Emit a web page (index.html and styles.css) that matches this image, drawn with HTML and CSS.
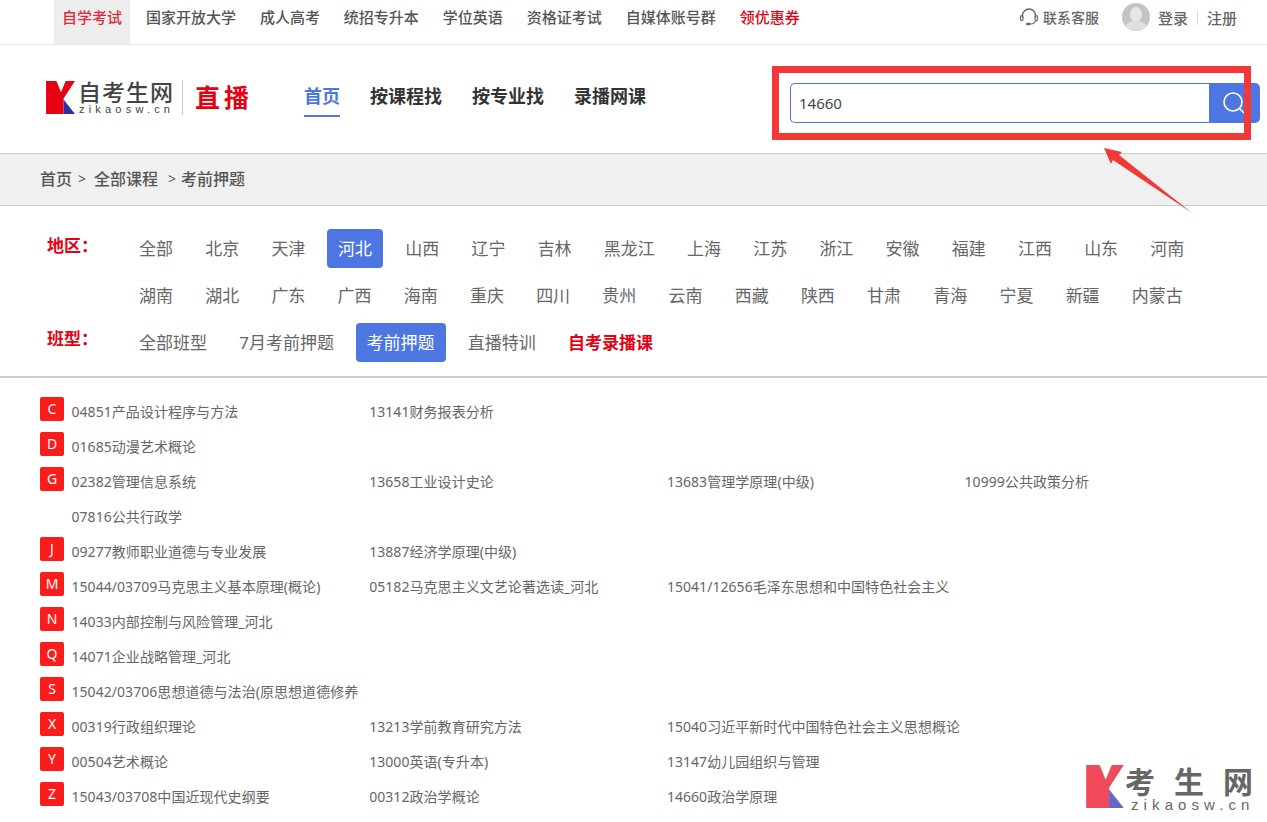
FILE: index.html
```html
<!DOCTYPE html>
<html lang="zh-CN">
<head>
  <meta charset="UTF-8" />
  <title>自考生网直播</title>
  <link rel="stylesheet" href="styles.css">
</head>
<body>
  <div class="topbar">
    <nav class="top-links">
      <a class="top-link current">自学考试</a>
      <a class="top-link">国家开放大学</a>
      <a class="top-link">成人高考</a>
      <a class="top-link">统招专升本</a>
      <a class="top-link">学位英语</a>
      <a class="top-link">资格证考试</a>
      <a class="top-link">自媒体账号群</a>
      <a class="top-link hot">领优惠券</a>
    </nav>
    <div class="top-user">
      <svg class="headset" viewBox="0 0 20 20" width="20" height="20" fill="none" stroke="#666">
        <path d="M3.5 11V8.5a6.5 6.5 0 0 1 13 0V11" stroke-width="1.4"/>
        <rect x="1.4" y="8.6" width="2.6" height="5" rx="1.3" stroke-width="1.1"/>
        <rect x="16" y="8.6" width="2.6" height="5" rx="1.3" stroke-width="1.1"/>
        <path d="M16.5 13.5c-.5 2.6-2.4 3.5-5 3.5" stroke-width="1.2"/>
        <rect x="7" y="15.8" width="4.6" height="2.4" rx="1.2" fill="#666" stroke="none"/>
      </svg>
      <span class="service">联系客服</span>
      <span class="avatar"><span class="avatar-head"></span><span class="avatar-body"></span></span>
      <a class="user-link">登录</a>
      <span class="user-sep"></span>
      <a class="user-link">注册</a>
    </div>
  </div>

  <header class="header">
    <div class="logo">
      <svg class="logo-k" viewBox="0 0 28 32" width="29" height="33">
        <path d="M0 0H10L14.5 11L19 0H28L17 17V32H0Z" fill="#e60012"/>
        <path d="M17 18L28 32H17Z" fill="#2a2fa8"/>
      </svg>
      <div class="logo-name">
        <div class="logo-cn">自考生网</div>
        <div class="logo-en">zikaosw.cn</div>
      </div>
      <span class="logo-sep"></span>
      <span class="logo-live">直播</span>
    </div>
    <nav class="main-nav">
      <a class="main-link current">首页</a>
      <a class="main-link">按课程找</a>
      <a class="main-link">按专业找</a>
      <a class="main-link">录播网课</a>
    </nav>
    <form class="search">
      <input class="search-input" type="text" value="14660" />
      <button class="search-btn" type="button">
        <svg viewBox="0 0 24 24" width="24" height="24" fill="none" stroke="#fff" stroke-width="1.6">
          <circle cx="11" cy="11" r="9"/>
          <path d="M17.5 17.5L22 22"/>
        </svg>
      </button>
    </form>
  </header>

  <div class="crumbs">
    <span>首页</span><i>&gt;</i><span>全部课程</span><i class="wide">&gt;</i><span>考前押题</span>
  </div>

  <section class="filters">
    <div class="filter-row">
      <div class="filter-label">地区：</div>
      <div class="filter-items">
        <a class="filter-item">全部</a>
        <a class="filter-item">北京</a>
        <a class="filter-item">天津</a>
        <a class="filter-item active">河北</a>
        <a class="filter-item">山西</a>
        <a class="filter-item">辽宁</a>
        <a class="filter-item">吉林</a>
        <a class="filter-item">黑龙江</a>
        <a class="filter-item">上海</a>
        <a class="filter-item">江苏</a>
        <a class="filter-item">浙江</a>
        <a class="filter-item">安徽</a>
        <a class="filter-item">福建</a>
        <a class="filter-item">江西</a>
        <a class="filter-item">山东</a>
        <a class="filter-item">河南</a>
        <a class="filter-item">湖南</a>
        <a class="filter-item">湖北</a>
        <a class="filter-item">广东</a>
        <a class="filter-item">广西</a>
        <a class="filter-item">海南</a>
        <a class="filter-item">重庆</a>
        <a class="filter-item">四川</a>
        <a class="filter-item">贵州</a>
        <a class="filter-item">云南</a>
        <a class="filter-item">西藏</a>
        <a class="filter-item">陕西</a>
        <a class="filter-item">甘肃</a>
        <a class="filter-item">青海</a>
        <a class="filter-item">宁夏</a>
        <a class="filter-item">新疆</a>
        <a class="filter-item">内蒙古</a>
      </div>
    </div>
    <div class="filter-row">
      <div class="filter-label">班型：</div>
      <div class="filter-items">
        <a class="filter-item">全部班型</a>
        <a class="filter-item">7月考前押题</a>
        <a class="filter-item active">考前押题</a>
        <a class="filter-item">直播特训</a>
        <a class="filter-item strong">自考录播课</a>
      </div>
    </div>
  </section>

  <section class="courses">
    <div class="course-group">
      <span class="letter">C</span>
      <div class="course-list">
        <a class="course">04851产品设计程序与方法</a>
        <a class="course">13141财务报表分析</a>
      </div>
    </div>
    <div class="course-group">
      <span class="letter">D</span>
      <div class="course-list">
        <a class="course">01685动漫艺术概论</a>
      </div>
    </div>
    <div class="course-group">
      <span class="letter">G</span>
      <div class="course-list">
        <a class="course">02382管理信息系统</a>
        <a class="course">13658工业设计史论</a>
        <a class="course">13683管理学原理(中级)</a>
        <a class="course">10999公共政策分析</a>
        <a class="course">07816公共行政学</a>
      </div>
    </div>
    <div class="course-group">
      <span class="letter">J</span>
      <div class="course-list">
        <a class="course">09277教师职业道德与专业发展</a>
        <a class="course">13887经济学原理(中级)</a>
      </div>
    </div>
    <div class="course-group">
      <span class="letter">M</span>
      <div class="course-list">
        <a class="course">15044/03709马克思主义基本原理(概论)</a>
        <a class="course">05182马克思主义文艺论著选读_河北</a>
        <a class="course">15041/12656毛泽东思想和中国特色社会主义</a>
      </div>
    </div>
    <div class="course-group">
      <span class="letter">N</span>
      <div class="course-list">
        <a class="course">14033内部控制与风险管理_河北</a>
      </div>
    </div>
    <div class="course-group">
      <span class="letter">Q</span>
      <div class="course-list">
        <a class="course">14071企业战略管理_河北</a>
      </div>
    </div>
    <div class="course-group">
      <span class="letter">S</span>
      <div class="course-list">
        <a class="course">15042/03706思想道德与法治(原思想道德修养</a>
      </div>
    </div>
    <div class="course-group">
      <span class="letter">X</span>
      <div class="course-list">
        <a class="course">00319行政组织理论</a>
        <a class="course">13213学前教育研究方法</a>
        <a class="course">15040习近平新时代中国特色社会主义思想概论</a>
      </div>
    </div>
    <div class="course-group">
      <span class="letter">Y</span>
      <div class="course-list">
        <a class="course">00504艺术概论</a>
        <a class="course">13000英语(专升本)</a>
        <a class="course">13147幼儿园组织与管理</a>
      </div>
    </div>
    <div class="course-group">
      <span class="letter">Z</span>
      <div class="course-list">
        <a class="course">15043/03708中国近现代史纲要</a>
        <a class="course">00312政治学概论</a>
        <a class="course">14660政治学原理</a>
      </div>
    </div>
  </section>

  <!-- annotation drawn over the screenshot -->
  <div class="mark-box"></div>
  <svg class="mark-arrow" viewBox="0 0 90 67" width="90" height="67">
    <path d="M1 1L19 5L16 8L89 66L10 13L8 17Z" fill="#f43838"/>
  </svg>

  <div class="watermark">
    <svg viewBox="0 0 28 32" width="38" height="43">
      <path d="M0 0H10L14.5 11L19 0H28L17 17V32H0Z" fill="#f04a5a"/>
      <path d="M17 18L28 32H17Z" fill="#6a66c8"/>
    </svg>
    <div class="watermark-name">
      <div class="watermark-cn"><span>考</span><span>生</span><span>网</span></div>
      <div class="watermark-en">zikaosw.cn</div>
    </div>
  </div>
</body>
</html>
```

FILE: styles.css
```css
* {
  margin: 0;
  padding: 0;
  box-sizing: border-box;
}

html, body {
  height: 822px;
  overflow: hidden;
}

body {
  position: relative;
  background: #fff;
  color: #666;
  font-family: "Noto Sans", "Noto Sans CJK SC", sans-serif;
}

/* top bar */
.topbar {
  display: flex;
  justify-content: space-between;
  height: 45px;
  padding: 0 30px 0 54px;
  border-bottom: 1px solid #e8e8e8;
}

.top-links {
  display: flex;
  column-gap: 7.95px;
}

.top-link {
  height: 44px;
  padding: 0 8px;
  font-size: 15px;
  line-height: 35px;
  font-weight: 500;
  color: #555;
}

.top-link.current {
  background: #eee;
  color: #e8283c;
}

.top-link.hot {
  color: #e60012;
}

.top-user {
  display: flex;
  align-items: center;
  height: 34px;
  font-size: 14px;
  font-weight: 500;
  color: #666;
}

.headset {
  margin-right: 4px;
}

.service {
  margin-right: 23px;
}

.avatar {
  position: relative;
  overflow: hidden;
  width: 28px;
  height: 28px;
  margin-right: 8px;
  border-radius: 50%;
  background: #c4c4c4;
}

.avatar-head {
  position: absolute;
  left: 8px;
  top: 4px;
  width: 12px;
  height: 15px;
  border-radius: 50%;
  background: #e6e6e6;
}

.avatar-body {
  position: absolute;
  left: 3px;
  top: 18px;
  width: 22px;
  height: 14px;
  border-radius: 50%;
  background: #e0e0e0;
}

.user-link {
  font-size: 15px;
}

.user-sep {
  width: 1px;
  height: 15px;
  margin: 0 9px;
  background: #ddd;
}

/* logo, nav, search */
.header {
  display: flex;
  align-items: flex-start;
  height: 108px;
  padding-left: 46px;
}

.logo {
  display: flex;
  align-items: center;
  width: 258px;
  height: 36px;
  margin-top: 34px;
}

.logo-name {
  width: 103px;
  margin-left: 3px;
  color: #444;
}

.logo-cn {
  font-family: "Noto Sans CJK SC", sans-serif;
  font-size: 23px;
  line-height: 24px;
  font-weight: 500;
  letter-spacing: 1px;
  white-space: nowrap;
}

.logo-en {
  padding-left: 1px;
  font-family: "Liberation Sans", sans-serif;
  font-size: 11px;
  line-height: 13px;
  letter-spacing: 4.2px;
  white-space: nowrap;
}

.logo-sep {
  width: 1px;
  height: 35px;
  margin: 0 12px 0 1px;
  background: #ccc;
}

.logo-live {
  margin-top: -2px;
  font-size: 25px;
  font-weight: 700;
  letter-spacing: 4px;
  white-space: nowrap;
  color: #e60012;
}

.main-nav {
  display: flex;
  column-gap: 30px;
  margin-top: 36px;
}

.main-link {
  height: 36px;
  font-size: 18px;
  line-height: 30px;
  font-weight: 700;
  color: #333;
}

.main-link.current {
  color: #4d76e2;
  border-bottom: 2px solid #4d76e2;
}

.search {
  display: flex;
  margin: 38px 0 0 144px;
}

.search-input {
  width: 419px;
  height: 40px;
  padding: 0 8px;
  border: 1px solid #4d76e2;
  border-right: none;
  border-radius: 5px 0 0 5px;
  outline: none;
  font-family: inherit;
  font-size: 15px;
  color: #444;
}

.search-btn {
  display: flex;
  align-items: center;
  justify-content: center;
  width: 51px;
  height: 40px;
  padding-right: 2px;
  border: none;
  border-radius: 0 5px 5px 0;
  background: #4d76e2;
}

/* breadcrumb */
.crumbs {
  display: flex;
  align-items: center;
  height: 53px;
  padding: 0 0 3px 40px;
  background: #f0f0f0;
  border-top: 1px solid #ccc;
  border-bottom: 1px solid #ccc;
  font-size: 16px;
  font-weight: 500;
  color: #555;
}

.crumbs i {
  margin: 0 8px 0 6px;
  font-style: normal;
  font-size: 14px;
  font-weight: 400;
}

.crumbs i.wide {
  margin: 0 5px 0 10px;
}

/* filters */
.filters {
  height: 172px;
  padding: 23px 0 0 47px;
  border-bottom: 2px solid #ccc;
}

.filter-row {
  display: flex;
}

.filter-label {
  width: 81px;
  padding-top: 4px;
  font-size: 17px;
  line-height: 26px;
  font-weight: 700;
  color: #e60012;
}

.filter-row + .filter-row .filter-label {
  padding-top: 3px;
}

.filter-items {
  display: flex;
  flex-wrap: wrap;
  column-gap: 10.2px;
  width: 1080px;
}

.filter-item {
  height: 39px;
  margin-bottom: 8px;
  padding: 0 11px;
  border-radius: 4px;
  font-size: 17px;
  line-height: 39px;
  white-space: nowrap;
  color: #666;
}

.filter-item.active {
  margin: 0 1px 8px 0.5px;
  background: #4d76e2;
  color: #fff;
}

.filter-item.strong {
  font-weight: 700;
  color: #e60012;
}

/* course list */
.courses {
  padding: 19px 0 0 40px;
}

.course-group {
  display: flex;
  align-items: flex-start;
}

.letter {
  flex: none;
  width: 24px;
  height: 24px;
  margin: 0 7.5px 11px 0;
  border-radius: 2px;
  background: #fb1c1c;
  font-size: 14px;
  line-height: 24px;
  text-align: center;
  color: #fff;
}

.course-list {
  display: flex;
  flex-wrap: wrap;
  width: 1192px;
}

.course {
  width: 290px;
  height: 35px;
  margin-right: 7.7px;
  font-size: 14px;
  line-height: 30px;
  letter-spacing: 0.05px;
  white-space: nowrap;
  color: #666;
}

/* things lying over the page */
.mark-box {
  position: absolute;
  left: 772px;
  top: 66px;
  width: 479px;
  height: 74px;
  border: 7px solid #f43838;
}

.mark-arrow {
  position: absolute;
  left: 1103px;
  top: 147px;
}

.watermark {
  position: absolute;
  left: 1086px;
  top: 765px;
  display: flex;
}

.watermark-name {
  margin-left: 1px;
  color: #666;
}

.watermark-cn {
  display: flex;
  justify-content: space-between;
  width: 128px;
  font-family: "Noto Sans CJK SC", sans-serif;
  font-size: 30px;
  line-height: 30px;
  font-weight: 700;
}

.watermark-en {
  padding-left: 6px;
  font-family: "Liberation Sans", sans-serif;
  font-size: 15px;
  line-height: 19px;
  letter-spacing: 5.1px;
  white-space: nowrap;
}
```
